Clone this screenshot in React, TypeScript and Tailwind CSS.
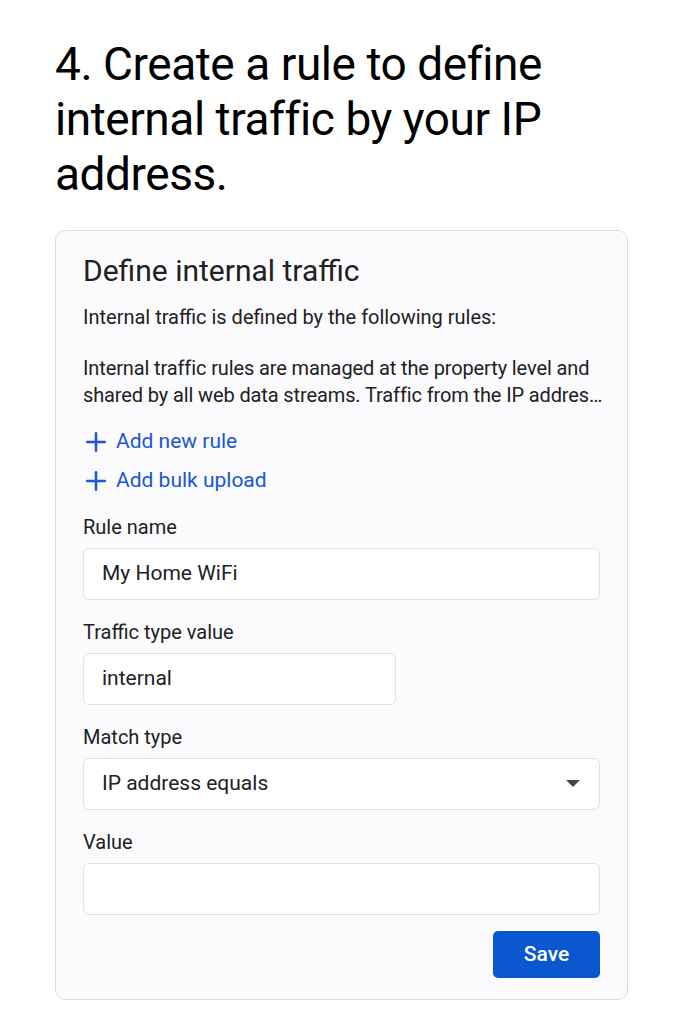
import { Plus } from "lucide-react";

function Field({
  label,
  value,
  narrow,
  select,
}: {
  label: string;
  value?: string;
  narrow?: boolean;
  select?: boolean;
}) {
  return (
    <div className="flex flex-col">
      <label className="text-[20px] leading-[24px] text-[#202124]">{label}</label>
      <div
        className={`mt-[9px] flex h-[52px] items-center justify-between rounded-[6px] border border-[#e0e2e6] bg-white pl-[18px] pr-[19px] ${
          narrow ? "w-[313px]" : "w-full"
        }`}
      >
        <span className="text-[21px] text-[#202124]">{value}</span>
        {select && (
          <svg width="14" height="8" viewBox="0 0 14 8">
            <path d="M0 0 L14 0 L7 7 Z" fill="#444746" />
          </svg>
        )}
      </div>
    </div>
  );
}

export default function App() {
  return (
    <div className="min-h-[1024px] bg-white px-[55px] pt-[37px] font-['Roboto',sans-serif]">
      <h1 className="text-[46px] font-normal leading-[55px] tracking-[-0.45px] text-black">
        4. Create a rule to define internal traffic by your IP address.
      </h1>

      <div className="mt-[28px] w-[573px] rounded-[10px] border border-[#dadce0] bg-[#fbfbfd] px-[27px] pb-[21px] pt-[22px]">
        <h2 className="text-[30px] leading-[36px] text-[#202124]">Define internal traffic</h2>
        <p className="mt-[15px] text-[20px] leading-[26px] text-[#202124]">
          Internal traffic is defined by the following rules:
        </p>
        <div className="mt-[25px] whitespace-nowrap text-[20px] leading-[27px] tracking-[-0.12px] text-[#202124]">
          <p>Internal traffic rules are managed at the property level and</p>
          <p>shared by all web data streams. Traffic from the IP addres…</p>
        </div>

        <div className="mt-[20px] flex flex-col gap-[13px] text-[#1a56d6]">
          <div className="flex h-[26px] items-center gap-[5px]">
            <Plus size={30} strokeWidth={2} className="-ml-[2px]" />
            <span className="text-[21px]">Add new rule</span>
          </div>
          <div className="flex h-[26px] items-center gap-[5px]">
            <Plus size={30} strokeWidth={2} className="-ml-[2px]" />
            <span className="text-[21px]">Add bulk upload</span>
          </div>
        </div>

        <div className="mt-[21px] flex flex-col gap-[20px]">
          <Field label="Rule name" value="My Home WiFi" />
          <Field label="Traffic type value" value="internal" narrow />
          <Field label="Match type" value="IP address equals" select />
          <Field label="Value" />
        </div>

        <div className="mt-[16px] flex justify-end">
          <button className="h-[47px] w-[107px] rounded-[5px] bg-[#0b57d0] text-[21px] font-medium text-white">
            Save
          </button>
        </div>
      </div>
    </div>
  );
}
